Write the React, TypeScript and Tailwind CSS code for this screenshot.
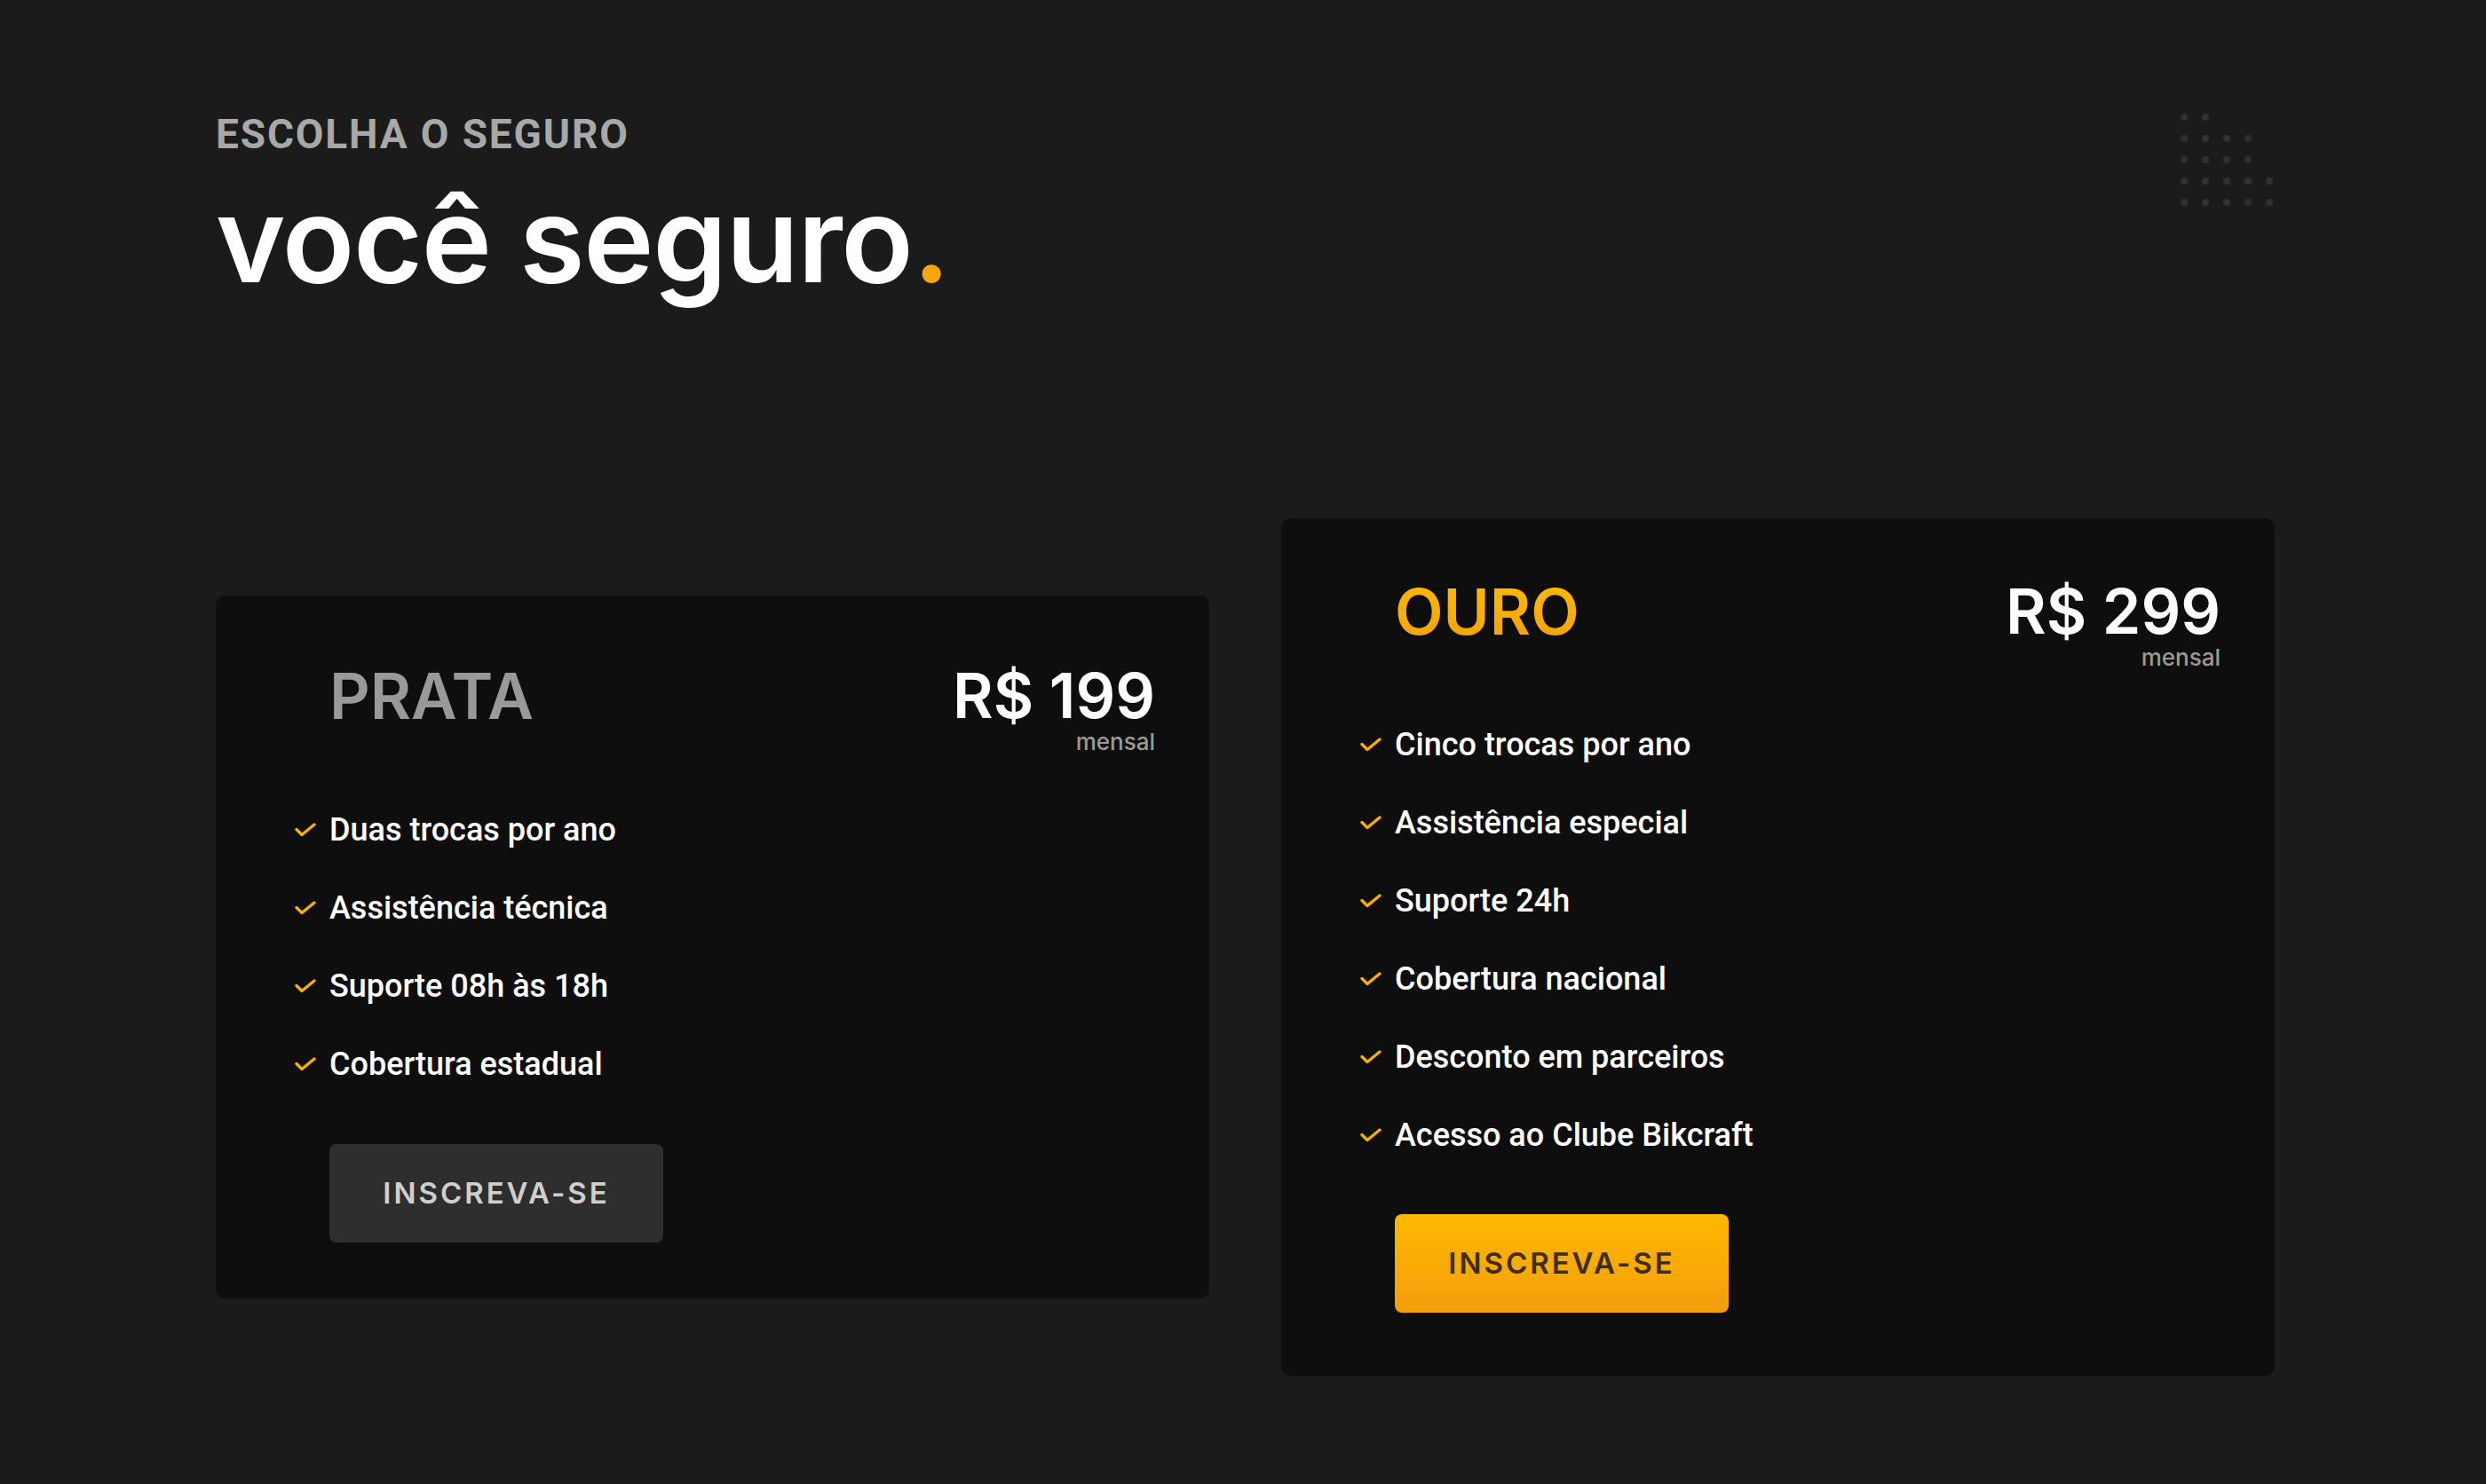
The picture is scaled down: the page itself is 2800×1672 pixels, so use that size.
import React from "react";

const DISPLAY = "font-['Inter','Liberation_Sans',sans-serif]";
const BODY = "font-['Roboto','Liberation_Sans',sans-serif]";

const DOT_ROWS = [2, 4, 4, 5, 5];

const Check: React.FC = () => (
  <svg width="24" height="16" viewBox="0 0 24 16" fill="none" className="shrink-0">
    <path d="M2 7.5 L8 13.5 L22 2" stroke="#f5ae06" strokeWidth="3.4" strokeLinecap="round" strokeLinejoin="round" />
  </svg>
);

type Plan = {
  name: string;
  price: string;
  features: string[];
  gold?: boolean;
};

const PLANS: Plan[] = [
  {
    name: "PRATA",
    price: "R$ 199",
    features: ["Duas trocas por ano", "Assistência técnica", "Suporte 08h às 18h", "Cobertura estadual"],
  },
  {
    name: "OURO",
    price: "R$ 299",
    gold: true,
    features: [
      "Cinco trocas por ano",
      "Assistência especial",
      "Suporte 24h",
      "Cobertura nacional",
      "Desconto em parceiros",
      "Acesso ao Clube Bikcraft",
    ],
  },
];

const PlanCard: React.FC<{ plan: Plan }> = ({ plan }) => {
  const gold = plan.gold;
  return (
    <div
      className={`w-[1119px] rounded-[10px] bg-[#0e0e0e] pl-[128px] pr-[61px] ${
        gold ? "pt-[70px] pb-[71px]" : "pt-[78px] pb-[63px]"
      }`}
    >
      {/* header */}
      <div className="flex items-start justify-between">
        <h3
          className={`${DISPLAY} text-[71px] leading-none font-semibold ${
            gold ? "bg-linear-to-b from-[#ffb900] to-[#f3a20c] bg-clip-text text-transparent" : "text-[#999999]"
          }`}
        >
          {plan.name}
        </h3>
        <div className="flex flex-col items-end">
          <span className={`${DISPLAY} text-[70px] leading-none font-semibold text-white`}>{plan.price}</span>
          <span className={`${DISPLAY} mt-[4px] text-[26px] leading-none font-medium text-[#9a9a9a]`}>mensal</span>
        </div>
      </div>

      {/* features */}
      <ul className={`-ml-[39px] ${gold ? "mt-[41px]" : "mt-[42px]"}`}>
        {plan.features.map((f) => (
          <li key={f} className="flex h-[88px] items-center gap-[15px]">
            <Check />
            <span className={`${BODY} text-[36px] leading-none font-medium text-white`}>{f}</span>
          </li>
        ))}
      </ul>

      <button
        className={`${DISPLAY} flex h-[111px] w-[376px] items-center justify-center rounded-[8px] text-[33px] font-semibold tracking-[0.09em] ${
          gold
            ? "mt-[45px] bg-linear-to-b from-[#ffb900] to-[#f39d0c] text-[#3f2e07]"
            : "mt-[46px] bg-[#2e2e2e] text-[#cfcfcf]"
        }`}
      >
        INSCREVA-SE
      </button>
    </div>
  );
};

export default function App() {
  return (
    <div className="h-[1672px] w-full bg-[#1b1b1b]">
      <div className="ml-[243px] w-[2319px] pt-[128px]">
        {/* title */}
        <div className="flex items-start justify-between">
          <div>
            <p className={`${BODY} text-[46px] leading-none font-bold tracking-[0.04em] text-[#a8a8a8]`}>
              ESCOLHA O SEGURO
            </p>
            <h1 className={`${DISPLAY} mt-[28px] text-[134px] leading-none font-semibold tracking-[-0.01em] text-white`}>
              você seguro<span className="text-[#f6a80b]">.</span>
            </h1>
          </div>
          <div className="flex flex-col gap-[16px] pr-[2px]">
            {DOT_ROWS.map((n, r) => (
              <div key={r} className="flex gap-[16px]">
                {Array.from({ length: 5 }).map((_, c) => (
                  <span
                    key={c}
                    className={`h-[8px] w-[8px] rounded-full ${c < n ? "bg-[#303030]" : "bg-transparent"}`}
                  />
                ))}
              </div>
            ))}
          </div>
        </div>

        {/* plans */}
        <div className="mt-[248px] flex items-center gap-[81px]">
          {PLANS.map((p) => (
            <PlanCard key={p.name} plan={p} />
          ))}
        </div>
      </div>
    </div>
  );
}
